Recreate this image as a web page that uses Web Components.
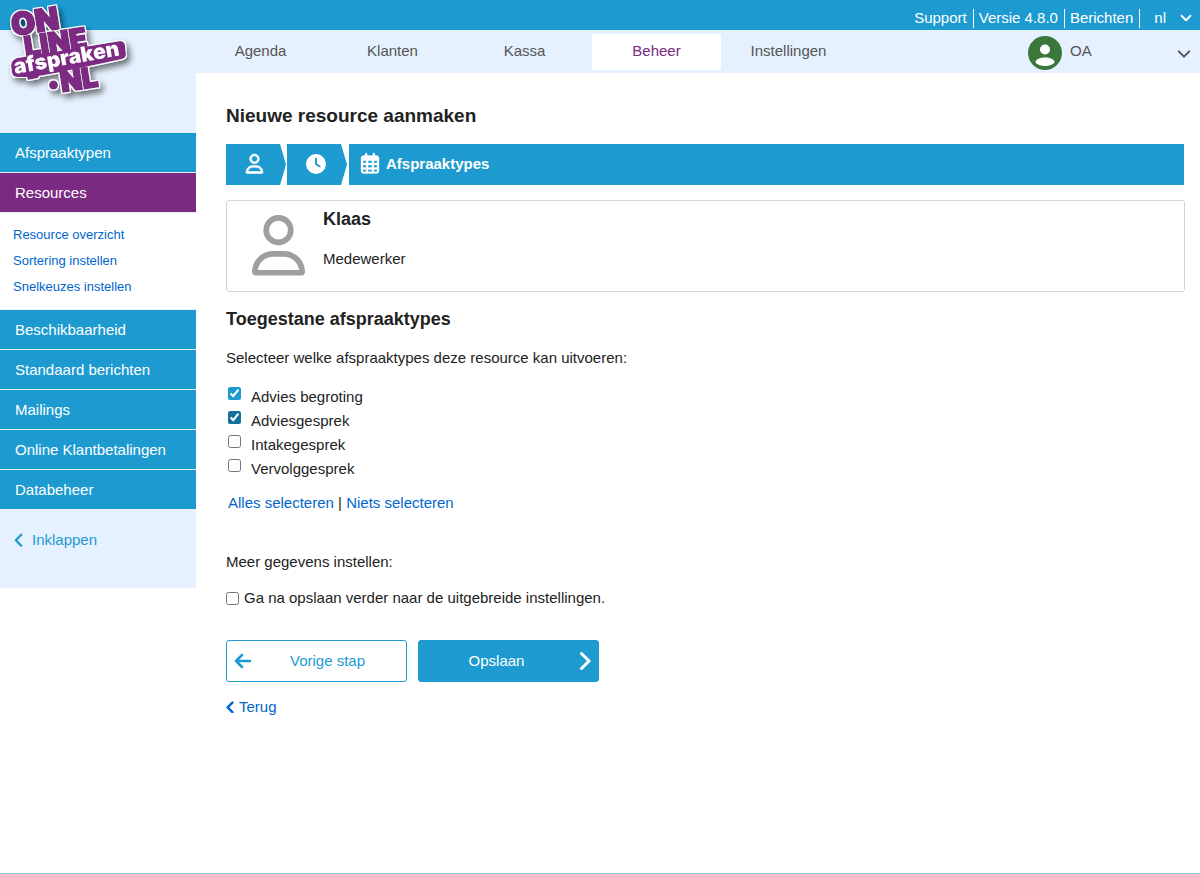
<!DOCTYPE html>
<html lang="nl">
<head>
<meta charset="utf-8">
<meta name="viewport" content="width=device-width, initial-scale=1">
<title>Nieuwe resource aanmaken</title>
<style>
  :root {
    --blue: #1d9bd0;
    --blue-dark: #14709b;
    --pale: #e5f1fe;
    --purple: #7b2a82;
    --link: #0066cc;
    --text: #222;
  }

  body {
    margin: 0;
    background: #fff;
    color: var(--text);
    font: 15px/20px "Liberation Sans", Arial, sans-serif;
  }
</style>
</head>
<body>
<app-shell>
  <top-bar slot="top"></top-bar>
  <brand-logo slot="logo"></brand-logo>
  <main-nav slot="nav" active="Beheer"></main-nav>
  <side-menu slot="side"></side-menu>
  <page-heading>Nieuwe resource aanmaken</page-heading>
  <wizard-steps></wizard-steps>
  <resource-card name="Klaas">Medewerker</resource-card>
  <type-form></type-form>
</app-shell>

<script>
const icons = {
  user: '<svg viewBox="0 0 448 512"><path fill="currentColor" d="M304 128a80 80 0 1 0-160 0 80 80 0 1 0 160 0zM96 128a128 128 0 1 1 256 0A128 128 0 1 1 96 128zM49.300 464H398.700c-8.900-63.300-63.300-112-129-112H178.300c-65.700 0-120.100 48.700-129 112zM0 482.300C0 383.800 79.800 304 178.300 304h91.400C368.200 304 448 383.800 448 482.300c0 16.400-13.300 29.700-29.700 29.700H29.700C13.300 512 0 498.700 0 482.300z"/></svg>',
  clock: '<svg viewBox="0 0 512 512"><path fill="currentColor" fill-rule="evenodd" d="M256 0a256 256 0 1 1 0 512A256 256 0 1 1 256 0zM232 120V256c0 8 4 15.500 10.700 20l96 64c11 7.400 25.900 4.400 33.300-6.700s4.400-25.900-6.700-33.300L280 243.200V120c0-13.300-10.700-24-24-24s-24 10.700-24 24z"/></svg>',
  calendar: '<svg viewBox="0 0 448 512"><path fill="currentColor" fill-rule="evenodd" d="M152 24c0-13.300-10.700-24-24-24s-24 10.700-24 24V64H64C28.700 64 0 92.700 0 128V448c0 35.300 28.700 64 64 64H384c35.300 0 64-28.700 64-64V128c0-35.300-28.700-64-64-64H344V24c0-13.300-10.700-24-24-24s-24 10.700-24 24V64H152V24zM48 192h80v56H48V192zm0 104h80v64H48V296zm128 0h96v64H176V296zm144 0h80v64H320V296zm80-48H320V192h80v56zm0 160v40c0 8.800-7.200 16-16 16H320V408h80zm-128 0v56H176V408h96zm-144 0v56H64c-8.800 0-16-7.200-16-16V408h80zM272 248H176V192h96v56z"/></svg>',
  avatar: '<svg viewBox="0 0 34 34"><circle cx="17" cy="17" r="17" fill="#3b763b"/><circle cx="17" cy="13.500" r="5" fill="#fff"/><path fill="#fff" d="M17 21.500c5 0 9.500 2 9.500 4.500 0 1.500-4 4-9.500 4s-9.500-2.500-9.500-4c0-2.500 4.500-4.500 9.500-4.500z"/></svg>',
  down: '<svg viewBox="0 0 16 16" fill="none" stroke="currentColor" stroke-width="2.400" stroke-linecap="round" stroke-linejoin="round"><path d="M2 5l6 6 6-6"/></svg>',
  left: '<svg viewBox="0 0 10 16" fill="none" stroke="currentColor" stroke-width="2.500" stroke-linecap="round" stroke-linejoin="round"><path d="M8 2L2 8l6 6"/></svg>',
  right: '<svg viewBox="0 0 12 20" fill="none" stroke="currentColor" stroke-width="3" stroke-linecap="round" stroke-linejoin="round"><path d="M2.500 2.500L10 10l-7.500 7.500"/></svg>',
  back: '<svg viewBox="0 0 18 16" fill="none" stroke="currentColor" stroke-width="2.500" stroke-linecap="round" stroke-linejoin="round"><path d="M16 8H2M8 2L2 8l6 6"/></svg>'
};

const shared = `
  :host, * { box-sizing: border-box; }
  a { text-decoration: none; }
  svg { display: block; }
`;

class BaseElement extends HTMLElement {
  constructor() {
    super();
    this.attachShadow({ mode: 'open' });
  }

  connectedCallback() {
    this.shadowRoot.innerHTML = `<style>${shared}${this.styles()}</style>${this.render()}`;
  }
}

// Page frame: bar on top, menu on the left, content on the right
class AppShell extends BaseElement {
  styles() {
    return `
      :host { display: flex; flex-direction: column; min-height: 100vh; border-bottom: 1px solid #8cc8e4; }
      .frame { display: grid; grid-template-columns: 196px minmax(0, 1fr); align-items: start; }
      header { grid-column: 1 / -1; }
      main { padding: 32px 15px 0 30px; }
      ::slotted([slot="logo"]) { position: absolute; left: 0; top: 0; }
    `;
  }

  render() {
    return `
      <slot name="top"></slot>
      <slot name="logo"></slot>
      <div class="frame">
        <header><slot name="nav"></slot></header>
        <slot name="side"></slot>
        <main><slot></slot></main>
      </div>
    `;
  }
}

class TopBar extends BaseElement {
  styles() {
    return `
      :host { display: flex; justify-content: flex-end; height: 30px; padding-top: 9px; background: var(--blue); color: #fff; }
      a { height: 19px; line-height: 18px; padding: 0 6px 0 5px; border-right: 1px solid #fff; color: #fff; }
      button { display: flex; align-items: center; gap: 14px; height: 18px; padding: 0 8px 0 14px; border: 0; background: none; color: #fff; font: inherit; }
      button svg { width: 12px; }
    `;
  }

  render() {
    return `
      <a href="#">Support</a>
      <a href="#">Versie 4.8.0</a>
      <a href="#">Berichten</a>
      <button type="button" aria-label="Taal: nl">nl ${icons.down}</button>
    `;
  }
}

class BrandLogo extends BaseElement {
  styles() {
    return `
      :host { display: block; width: 140px; }
      svg { width: 140px; height: 112px; }
      text { font-family: Inter, "Liberation Sans", sans-serif; font-weight: 900; fill: var(--purple); stroke: var(--purple); stroke-width: 2; }
      .name { fill: #fff; stroke: none; }
    `;
  }

  render() {
    return `
      <a href="#" aria-label="OnlineAfspraken.nl">
        <svg viewBox="0 0 140 112">
          <defs>
            <filter id="sticker" x="-20%" y="-20%" width="140%" height="150%">
              <feMorphology in="SourceAlpha" operator="dilate" radius="1.300" result="edge"/>
              <feFlood flood-color="#fff"/>
              <feComposite in2="edge" operator="in" result="rim"/>
              <feGaussianBlur in="edge" stdDeviation="3"/>
              <feOffset dx="3" dy="4"/>
              <feComponentTransfer result="shade"><feFuncA type="linear" slope="0.550"/></feComponentTransfer>
              <feMerge><feMergeNode in="shade"/><feMergeNode in="rim"/><feMergeNode in="SourceGraphic"/></feMerge>
            </filter>
          </defs>
          <g filter="url(#sticker)">
            <text transform="translate(13 36) rotate(-9)" font-size="31">ON</text>
            <text transform="translate(26 57) rotate(-9)" font-size="28">LINE</text>
            <text transform="translate(62 92) rotate(-9)" font-size="28">NL</text>
            <circle cx="53.500" cy="85" r="4.500" fill="#7b2a82"/>
            <path d="M17 58L120 41Q124 41 125 45L126 54Q126 58 122 59L104 63 56 73 39 76 38 78 28 80 27 77 17 77Q13 77 12 73L11 66Q11 60 17 58Z" fill="#7b2a82"/>
            <text class="name" transform="translate(15 74) rotate(-10)" font-size="21">afspraken</text>
          </g>
        </svg>
      </a>
    `;
  }
}

class MainNav extends BaseElement {
  styles() {
    return `
      :host { display: flex; height: 43px; padding-left: 196px; background: var(--pale); }
      nav { display: flex; gap: 3px; padding: 4px 0; }
      nav a { width: 129px; line-height: 34px; text-align: center; color: #555; }
      nav a[aria-current] { height: 36px; background: #fff; color: var(--purple); }
      button { display: flex; align-items: center; gap: 8px; margin-left: auto; width: 172px; padding: 2px 9px 0 0; border: 0; background: none; color: #555; font: inherit; }
      .face { width: 34px; }
      .caret { width: 14px; margin-left: auto; padding-top: 3px; }
      .label { padding-bottom: 4px; }
    `;
  }

  render() {
    const items = ['Agenda', 'Klanten', 'Kassa', 'Beheer', 'Instellingen'];
    const active = this.getAttribute('active');
    return `
      <nav>${items.map(item => `<a href="#"${item === active ? ' aria-current="page"' : ''}>${item}</a>`).join('')}</nav>
      <button type="button">
        <span class="face">${icons.avatar}</span><span class="label">OA</span><span class="caret">${icons.down}</span>
      </button>
    `;
  }
}

class SideMenu extends BaseElement {
  styles() {
    return `
      :host { display: block; padding: 60px 0 38px; background: var(--pale); }
      nav { display: grid; gap: 1px; }
      .item { padding-left: 15px; line-height: 39px; background: var(--blue); color: #fff; }
      .item.active { background: var(--purple); }
      .sub { display: grid; padding: 9px 13px; background: #fff; font-size: 13px; line-height: 26px; }
      .sub a { color: var(--link); }
      button { display: flex; align-items: center; gap: 9px; margin-top: 21px; padding: 0 14px; border: 0; background: none; color: var(--blue); font: inherit; }
      button svg { width: 9px; }
    `;
  }

  render() {
    const sub = ['Resource overzicht', 'Sortering instellen', 'Snelkeuzes instellen'];
    const rest = ['Beschikbaarheid', 'Standaard berichten', 'Mailings', 'Online Klantbetalingen', 'Databeheer'];
    return `
      <nav>
        <a class="item" href="#">Afspraaktypen</a>
        <a class="item active" href="#">Resources</a>
        <div class="sub">${sub.map(item => `<a href="#">${item}</a>`).join('')}</div>
        ${rest.map(item => `<a class="item" href="#">${item}</a>`).join('')}
      </nav>
      <button type="button">${icons.left} Inklappen</button>
    `;
  }
}

class PageHeading extends BaseElement {
  styles() {
    return `
      :host { display: block; }
      h1 { margin: 0 0 17px; font-size: 19px; line-height: 22px; }
    `;
  }

  render() {
    return '<h1><slot></slot></h1>';
  }
}

class WizardSteps extends BaseElement {
  styles() {
    return `
      :host { display: block; margin-right: 1px; }
      ol { display: flex; height: 41px; margin: 0; padding: 0; list-style: none; color: #fff; font-weight: bold; }
      li { display: flex; align-items: center; padding-bottom: 2px; }
      .done { width: 60px; margin-right: 1px; padding-right: 3px; justify-content: center; background: var(--blue); clip-path: polygon(0 0, 54px 0, 100% 50%, 54px 100%, 0 100%); }
      .current { flex: 1; gap: 7px; margin-left: 1px; padding-left: 12px; background: var(--blue); }
      .current svg { width: 18px; overflow: visible; stroke: currentColor; stroke-width: 8; }
      .user svg { width: 17px; overflow: visible; stroke: currentColor; stroke-width: 16; }
      .clock svg { width: 20px; }
    `;
  }

  render() {
    return `
      <ol>
        <li class="done user" aria-label="Resource">${icons.user}</li>
        <li class="done clock" aria-label="Tijden">${icons.clock}</li>
        <li class="current" aria-current="step">${icons.calendar}Afspraaktypes</li>
      </ol>
    `;
  }
}

class ResourceCard extends BaseElement {
  styles() {
    return `
      :host { display: flex; align-items: flex-start; gap: 18px; min-height: 92px; margin-top: 15px; padding: 7px 25px; border: 1px solid #d5d5d5; border-radius: 3px; }
      svg { width: 53px; margin-top: 7px; color: #9f9f9f; }
      h2 { margin: 0 0 19px; font-size: 18px; line-height: 22px; }
      p { margin: 0; }
    `;
  }

  render() {
    return `
      ${icons.user}
      <div>
        <h2>${this.getAttribute('name')}</h2>
        <p><slot></slot></p>
      </div>
    `;
  }
}

class TypeForm extends BaseElement {
  styles() {
    return `
      :host { display: block; margin-top: 16px; }
      h2 { margin: 0 0 18px; font-size: 18px; line-height: 22px; }
      p { margin: 0; }
      a { color: var(--link); }
      input { width: 13px; height: 13px; margin: 0; accent-color: var(--blue); }
      fieldset { display: grid; gap: 4px; margin: 19px 0 0; padding: 0 0 0 2px; border: 0; }
      fieldset label { display: flex; gap: 10px; }
      .focus { accent-color: var(--blue-dark); }
      .pick { margin: 14px 0 39px; padding-left: 2px; }
      .more { display: flex; align-items: center; gap: 5px; margin-top: 16px; }
      .actions { display: flex; gap: 11px; margin: 32px 0 15px; }
      .actions button { display: flex; align-items: center; width: 181px; height: 42px; padding: 0 7px; border: 1px solid var(--blue); border-radius: 3px; background: #fff; color: var(--blue); font: inherit; }
      .actions span { flex: 1; }
      .actions .save { background: var(--blue); color: #fff; }
      .prev svg { width: 18px; }
      .prev span { padding-left: 4px; }
      .save span { padding-right: 12px; }
      .save svg { width: 12px; }
      .return { display: inline-flex; align-items: center; gap: 5px; }
      .return svg { width: 8px; stroke-width: 3; }
    `;
  }

  render() {
    const types = [
      { name: 'Advies begroting', on: true },
      { name: 'Adviesgesprek', on: true, focus: true },
      { name: 'Intakegesprek' },
      { name: 'Vervolggesprek' }
    ];
    return `
      <h2>Toegestane afspraaktypes</h2>
      <p id="intro">Selecteer welke afspraaktypes deze resource kan uitvoeren:</p>
      <fieldset aria-labelledby="intro">
        ${types.map(t => `<label><input type="checkbox"${t.on ? ' checked' : ''}${t.focus ? ' class="focus"' : ''}>${t.name}</label>`).join('')}
      </fieldset>
      <p class="pick"><a href="#" data-all="1">Alles selecteren</a> | <a href="#" data-all="">Niets selecteren</a></p>
      <p>Meer gegevens instellen:</p>
      <label class="more"><input type="checkbox">Ga na opslaan verder naar de uitgebreide instellingen.</label>
      <div class="actions">
        <button type="button" class="prev">${icons.back}<span>Vorige stap</span></button>
        <button type="button" class="save"><span>Opslaan</span>${icons.right}</button>
      </div>
      <a class="return" href="#">${icons.left}Terug</a>
    `;
  }

  connectedCallback() {
    super.connectedCallback();
    this.shadowRoot.querySelectorAll('[data-all]').forEach(link => {
      link.addEventListener('click', event => {
        event.preventDefault();
        this.shadowRoot.querySelectorAll('fieldset input').forEach(box => {
          box.checked = Boolean(link.dataset.all);
        });
      });
    });
  }
}

customElements.define('app-shell', AppShell);
customElements.define('top-bar', TopBar);
customElements.define('brand-logo', BrandLogo);
customElements.define('main-nav', MainNav);
customElements.define('side-menu', SideMenu);
customElements.define('page-heading', PageHeading);
customElements.define('wizard-steps', WizardSteps);
customElements.define('resource-card', ResourceCard);
customElements.define('type-form', TypeForm);
</script>
</body>
</html>
